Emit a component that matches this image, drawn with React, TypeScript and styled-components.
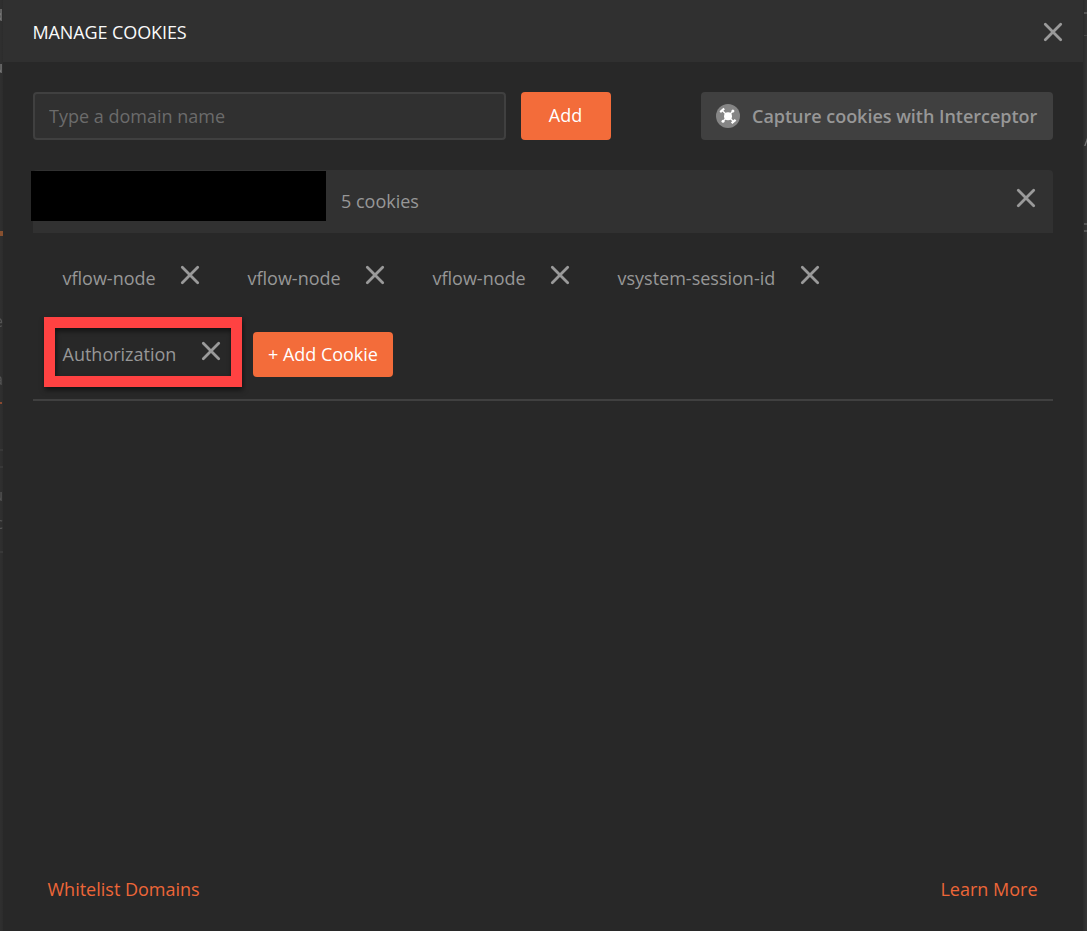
import React from "react";
import styled, { createGlobalStyle } from "styled-components";

const GlobalStyle = createGlobalStyle`
  * { box-sizing: border-box; }
  html, body { margin: 0; padding: 0; }
  body {
    background: #2f2f2f;
    color: #979797;
    font-family: "Open Sans", "Noto Sans", sans-serif;
    font-size: 18px;
    line-height: 24px;
    overflow: hidden;
  }
  button, input { font: inherit; }
`;

const Page = styled.div`
  position: relative;
  width: 1087px;
  height: 931px;
  padding: 0 4px 0 3px;
  overflow: hidden;
  background: linear-gradient(90deg, #303030, #2c2c2c 3px, #2b2b2b 1083px, #363636);
`;

const Sliver = styled.span<{ $side: "left" | "right"; $top: number; $height: number; $color: string; $width?: number }>`
  position: absolute;
  ${(p) => p.$side}: 0;
  top: ${(p) => p.$top}px;
  width: ${(p) => p.$width ?? 3}px;
  height: ${(p) => p.$height}px;
  background: ${(p) => p.$color};
`;

const Peek = styled.span<{ $side: "left" | "right"; $top: number; $color: string }>`
  position: absolute;
  ${(p) => p.$side}: 0;
  top: ${(p) => p.$top}px;
  width: 3px;
  height: 20px;
  overflow: hidden;
  display: flex;
  justify-content: ${(p) => (p.$side === "left" ? "flex-end" : "flex-start")};
  font-size: 16px;
  line-height: 20px;
  color: ${(p) => p.$color};
  will-change: transform;
`;

const Modal = styled.section`
  position: relative;
  display: flex;
  flex-direction: column;
  height: 931px;
  background: #282828;
`;

const Header = styled.header`
  display: flex;
  align-items: center;
  justify-content: space-between;
  flex: none;
  height: 62px;
  padding: 2px 20px 0 29.5px;
  background: #303030;
`;

const Title = styled.h1`
  margin: 0;
  color: #fafafa;
  font-size: 18px;
  font-weight: 510;
  line-height: 24px;
  letter-spacing: -0.1px;
`;

const IconButton = styled.button`
  display: flex;
  flex: none;
  padding: 0;
  border: 0;
  background: none;
  color: #9a9a9a;
`;

const Body = styled.main`
  flex: 1;
  padding: 30px 30px 0;
`;

const Toolbar = styled.div`
  display: flex;
  height: 48px;
`;

const DomainInput = styled.input`
  width: 473px;
  padding: 0 14px 1px;
  border: 2px solid #404040;
  border-radius: 4px;
  outline: 0;
  background: #303030;
  color: #979797;
  &::placeholder { color: #6b6b6b; opacity: 1; }
`;

const PrimaryButton = styled.button<{ $width: number; $height: number }>`
  width: ${(p) => p.$width}px;
  height: ${(p) => p.$height}px;
  padding: 0 0 1px;
  border: 0;
  border-radius: 4px;
  background: #f36c3a;
  color: #fff;
  font-weight: 530;
  letter-spacing: -0.03px;
  white-space: nowrap;
`;

const AddButton = styled(PrimaryButton)`
  margin-left: 15px;
  padding: 0 1px 2px 0;
`;

const CaptureButton = styled.button`
  display: flex;
  align-items: center;
  gap: 12px;
  width: 352px;
  height: 48px;
  margin-left: auto;
  padding: 0 0 0 15px;
  border: 0;
  border-radius: 4px;
  background: #404040;
  color: #979797;
  font-weight: 600;
  letter-spacing: -0.02px;
  white-space: nowrap;
`;

const DomainRow = styled.div`
  display: flex;
  align-items: flex-start;
  height: 63px;
  margin-top: 30px;
  padding: 1px 17px 0 0;
  border-radius: 4px 4px 0 0;
  background: #313131;
`;

const RedactedDomain = styled.span`
  width: 295px;
  height: 50px;
  margin-left: -2px;
  background: #000;
`;

const Count = styled.span`
  margin: 18px auto 0 15px;
`;

const RowClose = styled(IconButton)`
  margin-top: 17px;
`;

const CookieList = styled.div`
  height: 168px;
  padding: 26px 0 0 29.5px;
  border-bottom: 2px solid #404040;
`;

const CookieRow = styled.div`
  display: flex;
  align-items: center;
  height: 38px;
  & + & { margin-top: 38px; }
`;

const Cookie = styled.div<{ $width: number; $trailing: number }>`
  position: relative;
  display: flex;
  align-items: center;
  justify-content: space-between;
  width: ${(p) => p.$width}px;
  margin-right: ${(p) => p.$trailing}px;
`;

const CookieClose = styled(IconButton)`
  margin-top: -6px;
`;

const Highlight = styled.span`
  position: absolute;
  left: -18.5px;
  top: -25px;
  width: 198px;
  height: 70px;
  border: 11px solid #ff4242;
  box-shadow: 1px 3px 5px rgba(0, 0, 0, 0.55), inset 1px 3px 5px rgba(0, 0, 0, 0.55);
  pointer-events: none;
`;

const Footer = styled.footer`
  display: flex;
  justify-content: space-between;
  padding: 0 45.5px 30px 44.5px;
`;

const FooterLink = styled.a`
  color: #ed6638;
`;

const Cross = () => (
  <svg width="20" height="20" viewBox="0 0 20 20" fill="none" stroke="currentColor" strokeWidth="2.8" strokeLinecap="round">
    <path d="M2.3 2.3 17.7 17.7M17.7 2.3 2.3 17.7" />
  </svg>
);

const InterceptorIcon = () => (
  <svg width="24" height="24" viewBox="0 0 24 24" fill="none">
    <circle cx="12" cy="12" r="12" fill="#858585" />
    <g stroke="#fff" strokeLinecap="round">
      <path d="M6.5 6.8 17.5 17.5M17 7 7 17.3" strokeWidth="1.3" />
      <path d="M4.2 8.1 8.2 4.5M15.6 19.2 19.6 15.8" strokeWidth="2.2" strokeLinecap="butt" />
    </g>
    <g fill="#fff">
      <circle cx="12" cy="12.2" r="4" />
      <circle cx="16.9" cy="7" r="1.5" />
      <circle cx="7" cy="17.2" r="1.5" />
    </g>
  </svg>
);

const cookies = [
  { name: "vflow-node", width: 137.5, trailing: 47.5 },
  { name: "vflow-node", width: 137.5, trailing: 47.5 },
  { name: "vflow-node", width: 137.5, trailing: 47.5 },
  { name: "vsystem-session-id", width: 202.5, trailing: 0 },
];

export default function App() {
  return (
    <>
      <GlobalStyle />
      <Page>
        <Peek $side="left" $top={5} $color="#7c7c7c">d</Peek>
        <Peek $side="left" $top={57} $color="#7c7c7c">u</Peek>
        <Sliver $side="left" $top={231} $height={5} $color="#87502f" />
        <Peek $side="left" $top={311} $color="#545454">e</Peek>
        <Peek $side="left" $top={369} $color="#545454">a</Peek>
        <Sliver $side="left" $top={402} $height={2} $color="#8a4930" $width={2} />
        <Sliver $side="left" $top={449} $height={2} $color="#383838" />
        <Sliver $side="left" $top={466} $height={2} $color="#383838" />
        <Peek $side="left" $top={485} $color="#545454">u</Peek>
        <Peek $side="left" $top={513} $color="#545454">c</Peek>
        <Sliver $side="left" $top={551} $height={2} $color="#383838" />
        <Sliver $side="right" $top={12} $height={2} $color="#555" />
        <Sliver $side="right" $top={35} $height={1} $color="#484848" />
        <Peek $side="right" $top={130} $color="#777">/</Peek>
        <Sliver $side="right" $top={223} $height={2} $color="#555" />
        <Sliver $side="right" $top={230} $height={2} $color="#555" />
        <Modal>
          <Header>
            <Title>MANAGE COOKIES</Title>
            <IconButton aria-label="Close"><Cross /></IconButton>
          </Header>
          <Body>
            <Toolbar>
              <DomainInput placeholder="Type a domain name" />
              <AddButton $width={90} $height={48}>Add</AddButton>
              <CaptureButton>
                <InterceptorIcon />
                Capture cookies with Interceptor
              </CaptureButton>
            </Toolbar>
            <DomainRow>
              <RedactedDomain />
              <Count>5 cookies</Count>
              <RowClose aria-label="Remove domain"><Cross /></RowClose>
            </DomainRow>
            <CookieList>
              <CookieRow>
                {cookies.map((cookie, index) => (
                  <Cookie key={index} $width={cookie.width} $trailing={cookie.trailing}>
                    {cookie.name}
                    <CookieClose aria-label="Remove cookie"><Cross /></CookieClose>
                  </Cookie>
                ))}
              </CookieRow>
              <CookieRow>
                <Cookie $width={158.5} $trailing={32}>
                  Authorization
                  <CookieClose aria-label="Remove cookie"><Cross /></CookieClose>
                  <Highlight />
                </Cookie>
                <PrimaryButton $width={140} $height={45}>+ Add Cookie</PrimaryButton>
              </CookieRow>
            </CookieList>
          </Body>
          <Footer>
            <FooterLink>Whitelist Domains</FooterLink>
            <FooterLink>Learn More</FooterLink>
          </Footer>
        </Modal>
      </Page>
    </>
  );
}
